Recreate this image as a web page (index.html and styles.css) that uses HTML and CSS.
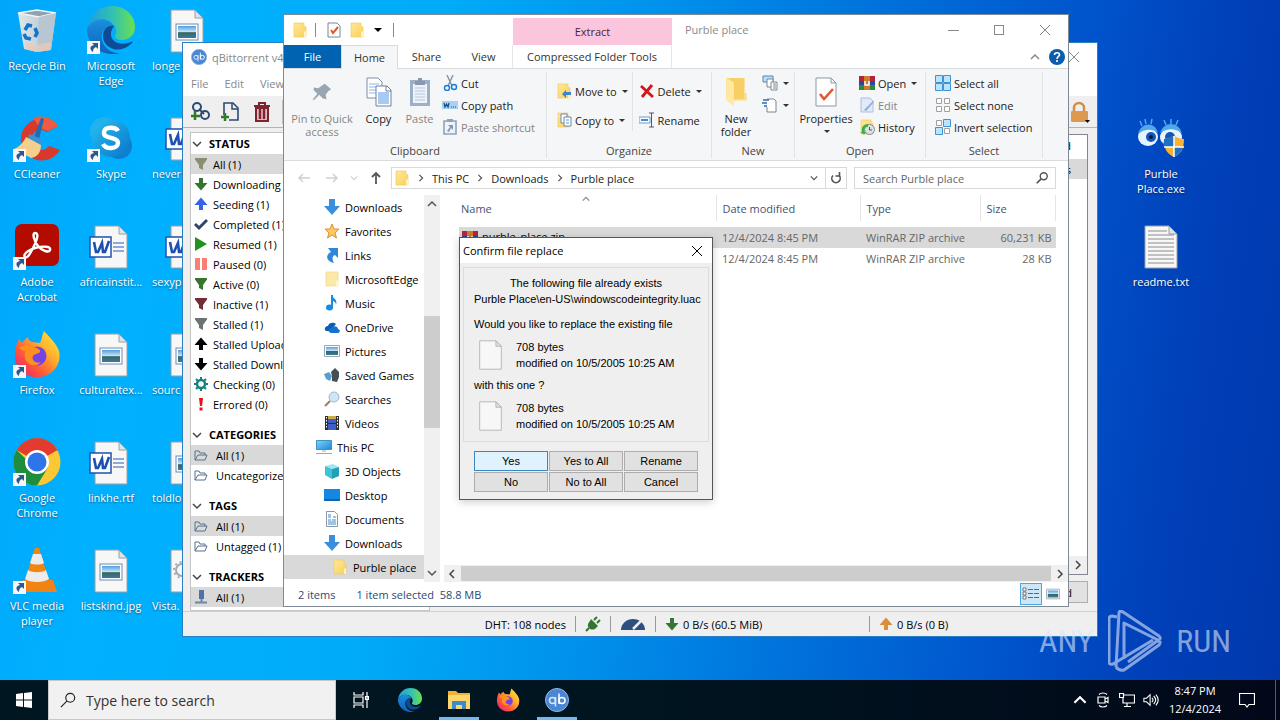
FILE: index.html
```html
<!DOCTYPE html>
<html lang="en">
<head>
    <meta charset="UTF-8">
    <meta name="viewport" content="width=device-width, initial-scale=1.0">
    <title>Desktop</title>
    <link rel="stylesheet" href="styles.css">
</head>
<body>
    <!-- icon sprite -->
    <svg class="sprite" aria-hidden="true">
        <defs>
            <linearGradient id="g-edge1" x1="0" y1="0" x2="1" y2="0"><stop offset="0" stop-color="#1b9de2"/><stop offset=".55" stop-color="#35c1b0"/><stop offset="1" stop-color="#6be04e"/></linearGradient>
            <linearGradient id="g-edge2" x1="0" y1="0" x2="0" y2="1"><stop offset="0" stop-color="#1a8fe0"/><stop offset="1" stop-color="#1160b8"/></linearGradient>
            <linearGradient id="g-fox" x1="1" y1="0" x2="0" y2="1"><stop offset="0" stop-color="#fff044"/><stop offset=".35" stop-color="#ffb22c"/><stop offset=".65" stop-color="#ff5a36"/><stop offset="1" stop-color="#e31587"/></linearGradient>
            <linearGradient id="g-sky" x1="0" y1="0" x2="0" y2="1"><stop offset="0" stop-color="#4ea0e4"/><stop offset=".5" stop-color="#cfe7f5"/><stop offset=".55" stop-color="#38675e"/><stop offset="1" stop-color="#3b78a8"/></linearGradient>
            <linearGradient id="g-skype" x1="0" y1="0" x2="1" y2="1"><stop offset="0" stop-color="#28c0f2"/><stop offset="1" stop-color="#0a76c8"/></linearGradient>
            <linearGradient id="g-bin" x1="0" y1="0" x2="1" y2="0"><stop offset="0" stop-color="#dfe6eb"/><stop offset="1" stop-color="#aebfcc"/></linearGradient>
            <linearGradient id="g-folder" x1="0" y1="0" x2="1" y2="1"><stop offset="0" stop-color="#ffe89a"/><stop offset="1" stop-color="#fbd058"/></linearGradient>
            <linearGradient id="g-pc" x1="0" y1="0" x2="1" y2="1"><stop offset="0" stop-color="#7fd4fb"/><stop offset="1" stop-color="#1c86d8"/></linearGradient>
        </defs>
        <symbol id="shortcut" viewBox="0 0 48 48">
            <rect x="0" y="35" width="13" height="13" fill="#f6f6f6"/>
            <path d="M5 37h6v6l-2-2c-2 1-3 2-3 5-4-3-3-6 1-7z" fill="#2d5791"/>
        </symbol>
        <symbol id="recycle" viewBox="0 0 48 48">
            <path d="M5 7l19-3 19 3-5 37-14 2-13-3z" fill="url(#g-bin)"/>
            <path d="M5 7l19-3 19 3-17 4z" fill="#8fa2b0" stroke="#f2f5f7" stroke-width="1.5"/>
            <path d="M26 11l17-4-5 37-14 2z" fill="#b7c6d1"/>
            <path d="M12 36l11 3v7l-11-3zM24 39l14-3-1 8-13 2z" fill="#efc8b4" opacity=".75"/>
            <path d="M12 24l3-5 4 1M22 22l2 5-2 4M18 33l-5-1-2-4" fill="none" stroke="#1573cc" stroke-width="3.6"/>
        </symbol>
        <symbol id="edge" viewBox="0 0 48 48">
            <path d="M0 23C2 9 12 0 25 0c14 0 23 10 23 21 0 8-6 13-13 13-5 0-8-2-7-4 2-3 2-8-2-12C20 11 5 12 0 23z" fill="url(#g-edge1)"/>
            <path d="M0 23c5-10 16-12 23-7 3 2 4 5 4 5-7-3-14 5-12 13 2 9 11 14 19 13-16 5-34-6-34-24z" fill="url(#g-edge2)"/>
            <path d="M27 20c-9-2-13 8-10 15 5 10 18 12 28 2 1-1 0-2-1-1-9 4-21 1-20-9 0-3 2-5 3-7z" fill="#0e4a96"/>
        </symbol>
        <symbol id="page" viewBox="0 0 48 48">
            <path d="M8 4h24l8 8v34H8z" fill="#f7f7f7" stroke="#9aa0a5"/>
            <path d="M32 4v8h8z" fill="#dfe3e6" stroke="#9aa0a5"/>
        </symbol>
        <symbol id="jpg" viewBox="0 0 48 48">
            <use href="#page"/>
            <rect x="13" y="18" width="22" height="16" fill="#fff" stroke="#6f8db4"/>
            <rect x="15" y="20" width="18" height="12" fill="url(#g-sky)"/>
        </symbol>
        <symbol id="word" viewBox="0 0 48 48">
            <use href="#page"/>
            <path d="M26 21h11M26 25h11M26 29h11" stroke="#2a5bbd"/>
            <rect x="3" y="15" width="21" height="20" fill="#fff" stroke="#1d50b0" stroke-width="1.5"/>
            <path d="M7 20l2 10h2l4-9 1 9h2l4-11" fill="none" stroke="#1d50b0" stroke-width="2.6"/>
        </symbol>
        <symbol id="gearfile" viewBox="0 0 48 48">
            <use href="#page"/>
            <circle cx="19" cy="24" r="6" fill="none" stroke="#a5abb0" stroke-width="2"/>
            <circle cx="19" cy="24" r="8" fill="none" stroke="#a5abb0" stroke-width="2" stroke-dasharray="2 3"/>
        </symbol>
        <symbol id="txt" viewBox="0 0 48 48">
            <use href="#page"/>
            <path d="M11 9h19M11 13h26M11 17h26M11 21h26M11 25h26M11 29h26M11 33h26M11 37h26M11 41h26" stroke="#8c8c8c"/>
        </symbol>
        <symbol id="ccleaner" viewBox="0 0 48 48">
            <path d="M45 12A21 21 0 1 0 47 36l-11-4a10 10 0 1 1-2-14z" fill="#d9382c"/>
            <path d="M45 12A21 21 0 0 0 20 4l7 10 8 3z" fill="#ef5a42"/>
            <path d="M28 4l3 1-5 20-5-2z" fill="#1e6cb4"/>
            <path d="M16 20l13 5-1 6-13-6z" fill="#3b93d4"/>
            <path d="M13 23l15 8c0 8-4 12-10 13L1 35c5-2 9-6 12-12z" fill="#f5cf8d"/>
        </symbol>
        <symbol id="skype" viewBox="0 0 48 48">
            <circle cx="17" cy="17" r="14" fill="#1fb2ee"/><circle cx="32" cy="32" r="13" fill="#0c7fd0"/>
            <circle cx="24" cy="24" r="19" fill="url(#g-skype)"/>
            <path d="M31 17c-2-4-13-5-14 1-1 8 14 4 14 11 0 6-12 7-15 1" fill="none" stroke="#fff" stroke-width="4.4"/>
        </symbol>
        <symbol id="acrobat" viewBox="0 0 48 48">
            <rect x="2" y="2" width="44" height="42" rx="7" fill="#b30b00"/>
            <path d="M12 35c-3-3 6-9 14-10s12 0 11 3-8 1-12-4-6-13-3-13c5 0 1 9-2 15s-6 11-8 9z" fill="none" stroke="#fff" stroke-width="2.4"/>
        </symbol>
        <symbol id="firefox" viewBox="0 0 48 48">
            <path d="M31 1c3 4 12 11 15 20 3 14-7 26-22 26S1 36 2 23c0-5 2-10 4-14l3 4c2-3 4-4 6-6 0 3 2 4 4 5l8 1c2-4 2-8 4-12z" fill="url(#g-fox)"/>
            <circle cx="24" cy="26" r="9.500" fill="#7542e5"/>
            <path d="M6 18c5-4 11-3 15-1 4 1 7 3 6 5s-5 1-7 4c-2 4 3 8 8 6-5 6-14 3-16-4-1-3 0-6 1-7-3-1-5-1-7-3z" fill="#ff8f20"/>
        </symbol>
        <symbol id="chrome" viewBox="0 0 48 48">
            <circle cx="24" cy="24" r="23.500" fill="#fcc934"/>
            <path d="M24 24L3.600 12A23.500 23.500 0 0 1 44.500 12z" fill="#e33b2e"/>
            <path d="M24 24h-8L3.600 12A23.500 23.500 0 0 0 24 47.500l11-18z" fill="#1e8e3e"/>
            <circle cx="24" cy="24" r="12" fill="#fff"/><circle cx="24" cy="24" r="9.500" fill="#2f74e8"/>
        </symbol>
        <symbol id="vlc" viewBox="0 0 48 48">
            <path d="M10 34h30l4 12H5z" fill="#f08217"/>
            <path d="M22 2h4l11 36c-5 4-21 4-26 0z" fill="#f2850f"/>
            <path d="M20 8h8l3 9c-3 2-11 2-14 0zM15 24c4 3 14 3 18 0l3 9c-5 4-19 4-24 0z" fill="#ececec"/>
        </symbol>
        <symbol id="eyes" viewBox="0 0 48 48">
            <ellipse cx="11" cy="23" rx="10" ry="9" fill="#e6f4ff"/><ellipse cx="34" cy="23" rx="11" ry="9" fill="#e6f4ff"/>
            <path d="M1 20c3-12 17-13 20-1-6-5-14-4-20 1zM23 19c4-12 18-12 22 0-7-5-15-5-22 0z" fill="#4fa8e8"/>
            <path d="M5 12L3 7M9 10L8 5M14 10l1-5M29 11l-2-5M34 10V5M39 11l2-5" stroke="#4fa8e8" stroke-width="1.500"/>
            <circle cx="14" cy="23" r="5" fill="#1457b8"/><circle cx="33" cy="23" r="5" fill="#1457b8"/>
            <circle cx="14" cy="23" r="2" fill="#021a44"/>
            <path d="M27 25c4 0 7-2 10-3 3 1 6 3 10 3 0 10-3 15-10 18-7-3-10-8-10-18z" fill="#f9b234"/>
            <path d="M37 22v11H27c-1-2 0-5 0-8 4 0 7-2 10-3zM37 33h9c-2 5-5 8-9 10z" fill="#1b72c4"/>
            <path d="M37 22v21M27 33h20" stroke="#fff" stroke-width="1.500"/>
        </symbol>
        <symbol id="qb" viewBox="0 0 24 24">
            <circle cx="12" cy="12" r="11.500" fill="#4a86d2" stroke="#8fb7ea"/>
            <circle cx="7.500" cy="12.500" r="3" fill="none" stroke="#d8e8fb" stroke-width="1.500"/><path d="M10.500 9v9.500" stroke="#d8e8fb" stroke-width="1.500"/>
            <circle cx="17" cy="12.500" r="3" fill="none" stroke="#fff" stroke-width="1.500"/><path d="M14 5.500V16" stroke="#fff" stroke-width="1.500"/>
        </symbol>
        <!-- torrent client icons -->
        <symbol id="addlink" viewBox="0 0 22 22"><circle cx="8" cy="6" r="4" fill="none" stroke="#2e4a73" stroke-width="2"/><circle cx="16" cy="14" r="4" fill="none" stroke="#2e4a73" stroke-width="2"/><path d="M10 8l5 5" stroke="#2e4a73" stroke-width="2"/><path d="M6 10v9M2 15h9" stroke="#2f7b2b" stroke-width="2.500"/></symbol>
        <symbol id="addfile" viewBox="0 0 22 22"><path d="M4 14V2h9l5 5v12H9" fill="none" stroke="#2e4a73" stroke-width="1.600"/><path d="M12 2v6h6" fill="none" stroke="#2e4a73" stroke-width="1.500"/><path d="M5 12v8M1 16h8" stroke="#2f7b2b" stroke-width="2.500"/></symbol>
        <symbol id="trash" viewBox="0 0 22 22"><path d="M3 5h16M8 5V2h6v3" fill="none" stroke="#7c2430" stroke-width="2"/><path d="M5 7h12v13H5z" fill="#e2b9bd" stroke="#7c2430" stroke-width="2"/><path d="M9 8v10M13 8v10" stroke="#7c2430" stroke-width="2.400"/></symbol>
        <symbol id="lock" viewBox="0 0 22 22"><path d="M6 11V7a5 5 0 0 1 10 0v4" fill="none" stroke="#d08e48" stroke-width="2.500"/><rect x="3" y="10" width="17" height="11" rx="1" fill="#dc9a50"/><path d="M17 19h5l-2.500 3z" fill="#000"/></symbol>
        <symbol id="funnel" viewBox="0 0 14 14"><path d="M1 1h12v1.500L9 8v5l-4-2V8L1 2.500z" fill="currentColor"/></symbol>
        <symbol id="down" viewBox="0 0 14 14"><path d="M5 1h4v5h4.500L7 13.500.5 6H5z" fill="currentColor"/></symbol>
        <symbol id="up" viewBox="0 0 14 14"><path d="M5 13h4V8h4.500L7 .5.500 8H5z" fill="currentColor"/></symbol>
        <symbol id="tick" viewBox="0 0 14 14"><path d="M1 7l4 4 8-8" fill="none" stroke="currentColor" stroke-width="3"/></symbol>
        <symbol id="play" viewBox="0 0 14 14"><path d="M1 0l12 7-12 7z" fill="currentColor"/></symbol>
        <symbol id="pause" viewBox="0 0 14 14"><path d="M1 1h5v12H1zM8 1h5v12H8z" fill="currentColor"/></symbol>
        <symbol id="gear" viewBox="0 0 14 14"><circle cx="7" cy="7" r="4" fill="none" stroke="currentColor" stroke-width="2.500"/><path d="M7 0v3M7 11v3M0 7h3M11 7h3M2 2l2 2M10 10l2 2M2 12l2-2M10 4l2-2" stroke="currentColor" stroke-width="2"/></symbol>
        <symbol id="bang" viewBox="0 0 14 14"><path d="M5 1h4l-1 8H6zM5.500 10.500h3v3h-3z" fill="currentColor"/></symbol>
        <symbol id="openfolder" viewBox="0 0 14 14"><path d="M1 12V3h4l1 2h5v2M1 12l3-5h9l-2 5z" fill="none" stroke="currentColor"/></symbol>
        <symbol id="server" viewBox="0 0 14 14"><path d="M5 0h5v9H5z" fill="#4c71ad"/><path d="M7.500 9v3M1 12.500h12" stroke="#6e86a5" stroke-width="2"/></symbol>
        <symbol id="chev" viewBox="0 0 10 10"><path d="M1 3l4 4 4-4" fill="none" stroke="currentColor" stroke-width="1.500"/></symbol>
        <symbol id="plug" viewBox="0 0 16 16"><path d="M1 15l3-3M9 4l3-3M12 7l3-3" stroke="currentColor" stroke-width="2"/><path d="M6 3l7 7-2 2c-2 2-5 2-7 0s-1-5 1-7z" fill="currentColor"/></symbol>
        <symbol id="gauge" viewBox="0 0 24 12"><path d="M0 12a12 11 0 0 1 24 0z" fill="#2f4f80"/><path d="M12 11l9-9" stroke="#efefef" stroke-width="2.500"/></symbol>
        <!-- explorer icons -->
        <symbol id="folder" viewBox="0 0 16 16"><path d="M2 1h10v3l2 1v10H2z" fill="url(#g-folder)" stroke="#ecc65a" stroke-width=".6"/><path d="M12 10l2-1v6h-2z" fill="#fff3c0"/></symbol>
        <symbol id="palefolder" viewBox="0 0 16 16"><path d="M2 1h12v14H2z" fill="#fbe9a8" stroke="#ecd486" stroke-width=".6"/><path d="M12 10l2-1v6h-2z" fill="#fff6d2"/></symbol>
        <symbol id="checkpage" viewBox="0 0 16 16"><path d="M2 1h9l3 3v11H2z" fill="#fff" stroke="#7b8794"/><path d="M5 8l2 3 5-6" fill="none" stroke="#e05a2b" stroke-width="2"/></symbol>
        <symbol id="pin" viewBox="0 0 24 24"><path d="M15 3l7 6-3 2-3 4 1 5-4-1-4-4-6 6-1-1 5-6-4-4V7l5 1 4-3z" fill="#9aa5b3"/></symbol>
        <symbol id="copy" viewBox="0 0 26 30"><path d="M1 1h11l4 4v16H1z" fill="#fff" stroke="#7d8ea3"/><path d="M3 7h10M3 10h10M3 13h10M3 16h10" stroke="#8cb8e8"/><path d="M10 9h11l4 4v16H10z" fill="#fff" stroke="#6f8197"/><path d="M20 9v5h5" fill="none" stroke="#6f8197"/><path d="M12 16h11M12 18h11M12 20h11M12 22h11M12 24h11M12 26h11" stroke="#4e97e6"/></symbol>
        <symbol id="paste" viewBox="0 0 22 30"><rect x="1" y="3" width="20" height="26" fill="#9db0ca"/><path d="M4 7h14v19H4z" fill="#eef3f9"/><path d="M6 4h10v4H6zM9 1h4v3H9z" fill="#8a98ac"/><path d="M6 11h10M6 14h10M6 17h10M6 20h10M6 23h10" stroke="#b5c6df"/></symbol>
        <symbol id="cut" viewBox="0 0 16 16"><path d="M5 0l5 11M11 0L6 11" stroke="#8492a3" stroke-width="1.400"/><circle cx="5" cy="13" r="2.500" fill="none" stroke="#1d7fd4" stroke-width="1.500"/><circle cx="12" cy="12" r="2.500" fill="none" stroke="#1d7fd4" stroke-width="1.500"/></symbol>
        <symbol id="path" viewBox="0 0 16 16"><path d="M0 4h16v8H0z" fill="#a8d2f2"/><path d="M2 6l1 4 1.500-3L6 10l1-4M9 10h1M11 10h1M13 10h1" fill="none" stroke="#174d85" stroke-width="1.200"/></symbol>
        <symbol id="pasteshort" viewBox="0 0 16 16"><path d="M2 2h12v13H2z" fill="#eef3f9" stroke="#8fa2bb" stroke-width="1.600"/><path d="M5 0h6v3H5z" fill="#8fa2bb"/><path d="M6 6h5v5l-2-2-2 4-2-1 3-4z" fill="#7f97b6"/></symbol>
        <symbol id="moveto" viewBox="0 0 16 16"><use href="#folder"/><path d="M15 9h-5V7l-4 4 4 4v-3h5z" fill="#3b86cf"/></symbol>
        <symbol id="copyto" viewBox="0 0 16 16"><use href="#folder"/><path d="M5 2h6v9H5z" fill="#fff" stroke="#6d87ab"/><path d="M8 5h7v9H8z" fill="#fff" stroke="#6d87ab"/><path d="M10 8h3M10 11h3" stroke="#4e97e6"/></symbol>
        <symbol id="delete" viewBox="0 0 16 16"><path d="M2 3l12 11M13 2L3 14" stroke="#d5141b" stroke-width="2.800"/></symbol>
        <symbol id="rename" viewBox="0 0 16 16"><path d="M0 5h11v6H0z" fill="#fff" stroke="#6d9cc8"/><path d="M2 7h7v2H2z" fill="#3f8fd8"/><path d="M10 1h5M10 15h5M12.500 1v14" stroke="#556"/></symbol>
        <symbol id="newfolder" viewBox="0 0 22 28"><path d="M2 1h17v20H2z" fill="#f8cf63"/><path d="M2 1l7 4v22l-7-5z" fill="#ffe9a3"/><path d="M19 15h2v7H9v-1h10z" fill="#fbdc83"/></symbol>
        <symbol id="newitem" viewBox="0 0 16 16"><path d="M1 1h10v6H1z" fill="#bfe0f6" stroke="#4d87b5"/><path d="M5 4h6v8H5z" fill="#fff" stroke="#7b8794"/><path d="M9 7h6v8H9z" fill="#fff" stroke="#7b8794"/><path d="M11 9h3M11 11h3M11 13h3" stroke="#7b8794"/></symbol>
        <symbol id="easy" viewBox="0 0 16 16"><path d="M5 2h7l2 2v11H5" fill="#fff" stroke="#7b8794"/><path d="M1 3h6M0 6h5M2 9h3" stroke="#2f6db3" stroke-width="1.300"/><path d="M5 10v5" stroke="#7b8794"/></symbol>
        <symbol id="props" viewBox="0 0 22 30"><path d="M1 1h15l5 5v23H1z" fill="#fff" stroke="#8b97a5"/><path d="M16 1v5h5" fill="none" stroke="#8b97a5"/><path d="M5 17l4 5 9-10" fill="none" stroke="#e4572e" stroke-width="2.600"/></symbol>
        <symbol id="rar" viewBox="0 0 16 16"><path d="M0 1h16v5H0z" fill="#b3243a"/><path d="M0 6h16v4H0z" fill="#2848a8"/><path d="M0 10h16v5H0z" fill="#2d8a3a"/><path d="M5 1h6v14H5z" fill="#cf7a2c"/><path d="M6 6v4h4V6" fill="none" stroke="#fff" stroke-width="1.500"/></symbol>
        <symbol id="editpage" viewBox="0 0 16 16"><path d="M2 1h9l3 3v11H2z" fill="#dfeafa" stroke="#aebfdc"/><path d="M5 13l9-9 1 1-8 9z" fill="#93a9cd"/></symbol>
        <symbol id="history" viewBox="0 0 16 16"><use href="#folder"/><circle cx="10.500" cy="10.500" r="5" fill="#d9e3e4" stroke="#7f8f92"/><path d="M10.500 8v3h2.500" fill="none" stroke="#555"/><path d="M9 5c-5 0-7 4-6 8H1l4 2.500L7.500 13H5.500C5 10 6 8 9 8z" fill="#3fae49"/></symbol>
        <symbol id="selall" viewBox="0 0 16 16"><path d="M.5.5h7v7h-7zM8.500.5h7v7h-7zM.5 8.500h7v7h-7zM8.500 8.500h7v7h-7z" fill="#bfe3fb" stroke="#3b93d8"/></symbol>
        <symbol id="selnone" viewBox="0 0 16 16"><path d="M1.500 1.500h5v5h-5zM9.500 1.500h5v5h-5zM1.500 9.500h5v5h-5zM9.500 9.500h5v5h-5z" fill="#fff" stroke="#a0a0a0"/></symbol>
        <symbol id="selinv" viewBox="0 0 16 16"><path d="M1.500 1.500h5v5h-5zM9.500 9.500h5v5h-5z" fill="#fff" stroke="#a0a0a0"/><path d="M8.500.5h7v7h-7zM.5 8.500h7v7h-7z" fill="#bfe3fb" stroke="#3b93d8"/></symbol>
        <symbol id="help" viewBox="0 0 16 16"><circle cx="8" cy="8" r="8" fill="#0b5cad"/><path d="M5.500 6c0-3 5-3 5 0 0 1.500-2.500 1.500-2.500 4M8 11v2" fill="none" stroke="#fff" stroke-width="1.600"/></symbol>
        <symbol id="arrow" viewBox="0 0 16 16"><path d="M14 8H3M7 4L3 8l4 4" fill="none" stroke="currentColor" stroke-width="1.500"/></symbol>
        <symbol id="arrowup" viewBox="0 0 16 16"><path d="M8 14V3M4 7l4-4 4 4" fill="none" stroke="currentColor" stroke-width="1.800"/></symbol>
        <symbol id="refresh" viewBox="0 0 12 12"><path d="M9 3.500A4.200 4.200 0 1 1 3 3.500" fill="none" stroke="currentColor" stroke-width="1.600"/><path d="M5.500 4H9.500V0" fill="none" stroke="currentColor" stroke-width="1.600"/></symbol>
        <symbol id="glass" viewBox="0 0 16 16"><circle cx="10" cy="6" r="4" fill="none" stroke="currentColor" stroke-width="1.600"/><path d="M7 9l-5 5" stroke="currentColor" stroke-width="2"/></symbol>
        <symbol id="bigglass" viewBox="0 0 18 18"><circle cx="11.500" cy="6.500" r="5" fill="none" stroke="currentColor" stroke-width="1.300"/><path d="M8 10l-7 7" stroke="currentColor" stroke-width="1.300"/></symbol>
        <symbol id="close" viewBox="0 0 12 12"><path d="M1 1l10 10M11 1L1 11" stroke="currentColor"/></symbol>
        <symbol id="bluedown" viewBox="0 0 16 16"><path d="M5 0h6v7h5l-8 9-8-9h5z" fill="#3b8ede"/></symbol>
        <symbol id="star" viewBox="0 0 16 16"><path d="M8 1l2 5h5l-4 4 1.500 5L8 12l-4.500 3L5 10 1 6h5z" fill="#fcc95e" stroke="#dd8f3b"/></symbol>
        <symbol id="link" viewBox="0 0 16 16"><path d="M4 1h10v10l-3-3c-3 1-3 4-1 8-8-2-9-8-3-11z" fill="#2f87d9"/></symbol>
        <symbol id="music" viewBox="0 0 16 16"><path d="M8 0c1 4 6 4 4 10 0-3-2-4-4-4" fill="#168be0"/><ellipse cx="5.500" cy="12.500" rx="3.500" ry="3" fill="#168be0"/><path d="M8 0v12" stroke="#168be0" stroke-width="2"/></symbol>
        <symbol id="onedrive" viewBox="0 0 16 16"><path d="M1 11a3 3 0 0 1 3-4c1-4 6-4 8-2L6 12H2z" fill="#0a5fb5"/><path d="M5 13c-1-3 1-4 3-4 1-3 6-2 6 1 3 1 2 4 0 4H7z" fill="#1373cf"/></symbol>
        <symbol id="picture" viewBox="0 0 16 16"><path d="M.5 2.500h15v11H.5z" fill="#fff" stroke="#9aa7b3"/><path d="M2 4h12v8H2z" fill="url(#g-sky)"/></symbol>
        <symbol id="games" viewBox="0 0 16 16"><path d="M8 14V9L7 5l4-4 4 4v5l-2 5z" fill="#444e57"/><path d="M0 7l5-2 3 4-2 5-4-2z" fill="#5c9ed0"/></symbol>
        <symbol id="searches" viewBox="0 0 16 16"><circle cx="10" cy="6" r="5" fill="#cfe6f7" stroke="#a5b7c4"/><path d="M6 10l-5 5" stroke="#a2795d" stroke-width="2"/></symbol>
        <symbol id="video" viewBox="0 0 16 16"><path d="M1 1h14v14H1z" fill="#303030"/><path d="M4 1h8v7H4z" fill="#cda94a"/><path d="M4 4h8v4H4zM4 9h8v6H4z" fill="#3e5fc4"/><path d="M2.500 2v12M13.500 2v12" stroke="#fff" stroke-dasharray="1.500 1.500"/></symbol>
        <symbol id="pc" viewBox="0 0 16 16"><path d="M.5 1.500h15v9H.5z" fill="url(#g-pc)" stroke="#4290c4"/><path d="M6 12h4M0 14.500h16" stroke="#9aa7b3"/></symbol>
        <symbol id="cube" viewBox="0 0 16 16"><path d="M1 3l8-2 6 3-7 2z" fill="#9fe6ee"/><path d="M1 3l7 3v10l-7-4z" fill="#3cc3d6"/><path d="M8 6l7-2v9l-7 3z" fill="#1f9fb8"/></symbol>
        <symbol id="desk" viewBox="0 0 16 16"><path d="M0 2h16v12H0z" fill="#1488e0"/><path d="M0 12h16v2H0z" fill="#0b64b4"/></symbol>
        <symbol id="docs" viewBox="0 0 16 16"><path d="M2.500.5h8l3 3v12h-11z" fill="#fff" stroke="#8a98a6"/><path d="M4 4h3M4 6h3M9 6h3M4 9h3M8 9h4M4 11h8M4 13h8" stroke="#3f89c9"/></symbol>
        <symbol id="details" viewBox="0 0 18 14"><path d="M1 1h3v3H1zM1 5h3v3H1zM1 9h3v3H1z" fill="#fff" stroke="#777"/><path d="M6 2.500h5M12 2.500h5M6 6.500h5M12 6.500h5M6 10.500h5M12 10.500h5" stroke="#666"/></symbol>
        <!-- taskbar icons -->
        <symbol id="windows" viewBox="0 0 16 16"><path d="M0 2l7-1v6.500H0zM8 1l8-1v7.500H8zM0 8.500h7V15l-7-1zM8 8.500h8V16l-8-1z" fill="#fff"/></symbol>
        <symbol id="taskview" viewBox="0 0 16 16"><path d="M1 0v3h9V0M1 16v-3h9v3M1 5h9v6H1zM14 0v16M12.500 4.500h3v3h-3z" fill="none" stroke="#fff" stroke-width="1.200"/></symbol>
        <symbol id="filesapp" viewBox="0 0 24 24"><path d="M1 3h8l2 2h12v16H1z" fill="#f2b233"/><path d="M1 7h22v14H1z" fill="#ffd66b"/><path d="M5 13h14v8h-4v-4H9v4H5z" fill="#3b8ccb"/></symbol>
        <symbol id="camera" viewBox="0 0 16 16"><path d="M3 5h7v6H3zM10 7l3-1.500v5L10 9M4 2.500c2-2 6-2 8 0M4 13.500c2 2 6 2 8 0" fill="none" stroke="#fff" stroke-width="1.200"/></symbol>
        <symbol id="network" viewBox="0 0 16 16"><path d="M5 3h10.500v8H4V6M8 11v3M5 14.500h7M.5 1.500h4v4h-4z" fill="none" stroke="#fff" stroke-width="1.200"/></symbol>
        <symbol id="volume" viewBox="0 0 18 16"><path d="M1 6h3l4-4v12l-4-4H1zM10 5.500c1.500 1.500 1.500 3.500 0 5M12 3.500c3 3 3 6 0 9M14.500 2c3.500 4 3.500 8 0 12" fill="none" stroke="#fff" stroke-width="1.200"/></symbol>
        <symbol id="action" viewBox="0 0 16 16"><path d="M.5 1.500h15v11H10l-2 2.500-2-2.500H.5z" fill="none" stroke="#fff" stroke-width="1.200"/></symbol>
    </svg>

    <main class="desktop">
        <div class="shortcuts">
            <button class="shortcut"><svg><use href="#recycle"/></svg>Recycle Bin</button>
            <button class="shortcut"><svg><use href="#ccleaner"/><use href="#shortcut"/></svg>CCleaner</button>
            <button class="shortcut"><svg><use href="#acrobat"/><use href="#shortcut"/></svg>Adobe Acrobat</button>
            <button class="shortcut"><svg><use href="#firefox"/><use href="#shortcut"/></svg>Firefox</button>
            <button class="shortcut"><svg><use href="#chrome"/><use href="#shortcut"/></svg>Google Chrome</button>
            <button class="shortcut"><svg><use href="#vlc"/><use href="#shortcut"/></svg>VLC media player</button>
            <button class="shortcut"><svg><use href="#edge"/><use href="#shortcut"/></svg>Microsoft Edge</button>
            <button class="shortcut"><svg><use href="#skype"/><use href="#shortcut"/></svg>Skype</button>
            <button class="shortcut"><svg><use href="#word"/></svg>africainstit...</button>
            <button class="shortcut"><svg><use href="#jpg"/></svg>culturaltex...</button>
            <button class="shortcut"><svg><use href="#word"/></svg>linkhe.rtf</button>
            <button class="shortcut"><svg><use href="#jpg"/></svg>listskind.jpg</button>
            <button class="shortcut clipped"><svg><use href="#jpg"/></svg>longe</button>
            <button class="shortcut clipped"><svg><use href="#word"/></svg>never</button>
            <button class="shortcut clipped"><svg><use href="#word"/></svg>sexyp</button>
            <button class="shortcut clipped"><svg><use href="#jpg"/></svg>sourc</button>
            <button class="shortcut clipped"><svg><use href="#jpg"/></svg>toldlo</button>
            <button class="shortcut clipped"><svg><use href="#gearfile"/></svg>Vista.</button>
        </div>
        <div class="shortcuts shortcuts-right">
            <button class="shortcut"><svg><use href="#eyes"/></svg>Purble Place.exe</button>
            <button class="shortcut"><svg><use href="#txt"/></svg>readme.txt</button>
        </div>

        <section class="window torrent">
            <header class="torrent-title">
                <svg class="icon"><use href="#qb"/></svg>
                <span>qBittorrent v4</span>
                <button class="close" aria-label="Close"><svg><use href="#close"/></svg></button>
            </header>
            <nav class="torrent-menu">
                <button>File</button>
                <button>Edit</button>
                <button>View</button>
            </nav>
            <div class="torrent-tools">
                <button aria-label="Add link"><svg><use href="#addlink"/></svg></button>
                <button aria-label="Add file"><svg><use href="#addfile"/></svg></button>
                <button aria-label="Remove"><svg><use href="#trash"/></svg></button>
                <i></i>
                <button class="lock" aria-label="Lock"><svg><use href="#lock"/></svg></button>
            </div>
            <div class="torrent-body">
                <aside class="filters">
                    <h2><svg><use href="#chev"/></svg>STATUS</h2>
                    <ul>
                        <li class="active"><svg class="olive"><use href="#funnel"/></svg>All (1)</li>
                        <li><svg class="green"><use href="#down"/></svg>Downloading</li>
                        <li><svg class="blue"><use href="#up"/></svg>Seeding (1)</li>
                        <li><svg class="navy"><use href="#tick"/></svg>Completed (1)</li>
                        <li><svg class="lime"><use href="#play"/></svg>Resumed (1)</li>
                        <li><svg class="salmon"><use href="#pause"/></svg>Paused (0)</li>
                        <li><svg class="green"><use href="#funnel"/></svg>Active (0)</li>
                        <li><svg class="wine"><use href="#funnel"/></svg>Inactive (1)</li>
                        <li><svg class="grey"><use href="#funnel"/></svg>Stalled (1)</li>
                        <li><svg><use href="#up"/></svg>Stalled Uploading</li>
                        <li><svg><use href="#down"/></svg>Stalled Downloading</li>
                        <li><svg class="teal"><use href="#gear"/></svg>Checking (0)</li>
                        <li><svg class="red"><use href="#bang"/></svg>Errored (0)</li>
                    </ul>
                    <h2><svg><use href="#chev"/></svg>CATEGORIES</h2>
                    <ul class="wide">
                        <li class="active"><svg class="steel"><use href="#openfolder"/></svg>All (1)</li>
                        <li><svg class="steel"><use href="#openfolder"/></svg>Uncategorized</li>
                    </ul>
                    <h2><svg><use href="#chev"/></svg>TAGS</h2>
                    <ul class="wide">
                        <li class="active"><svg class="steel"><use href="#openfolder"/></svg>All (1)</li>
                        <li><svg class="steel"><use href="#openfolder"/></svg>Untagged (1)</li>
                    </ul>
                    <h2><svg><use href="#chev"/></svg>TRACKERS</h2>
                    <ul class="wide">
                        <li class="active"><svg><use href="#server"/></svg>All (1)</li>
                    </ul>
                </aside>
                <div class="transfers">
                    <div class="transfer-list">
                        <div class="transfer-head">d</div>
                        <div class="transfer-row">s</div>
                        <button class="scroll-right" aria-label="Scroll right"><svg class="right"><use href="#chev"/></svg></button>
                    </div>
                    <button class="speed">d</button>
                </div>
            </div>
            <footer class="torrent-status">
                <span>DHT: 108 nodes</span>
                <span><svg class="plug"><use href="#plug"/></svg></span>
                <span><svg class="gauge"><use href="#gauge"/></svg></span>
                <span class="rate"><svg class="green"><use href="#down"/></svg>0 B/s (60.5 MiB)</span>
                <span class="rate"><svg class="orange"><use href="#up"/></svg>0 B/s (0 B)</span>
            </footer>
        </section>

        <section class="window explorer">
            <header class="explorer-top">
                <div class="quick">
                    <svg><use href="#folder"/></svg><i></i>
                    <svg><use href="#checkpage"/></svg>
                    <svg><use href="#folder"/></svg>
                    <b class="caret customize"></b><i></i>
                </div>
                <div class="context">Extract</div>
                <h1>Purble place</h1>
                <div class="controls">
                    <button aria-label="Minimize"><span class="min"></span></button>
                    <button aria-label="Maximize"><span class="max"></span></button>
                    <button aria-label="Close"><svg><use href="#close"/></svg></button>
                </div>
            </header>
            <nav class="tabs">
                <button class="file">File</button>
                <button class="home">Home</button>
                <button>Share</button>
                <button>View</button>
                <button class="tools">Compressed Folder Tools</button>
                <div class="tabs-end">
                    <svg class="collapse"><use href="#chev"/></svg>
                    <svg><use href="#help"/></svg>
                </div>
            </nav>
            <div class="ribbon">
                <section class="group clipboard">
                    <div class="group-body">
                        <button class="big muted"><svg class="pin"><use href="#pin"/></svg>Pin to Quick access</button>
                        <button class="big"><svg><use href="#copy"/></svg>Copy</button>
                        <button class="big muted"><svg><use href="#paste"/></svg>Paste</button>
                        <div class="stack">
                            <button><svg><use href="#cut"/></svg>Cut</button>
                            <button><svg><use href="#path"/></svg>Copy path</button>
                            <button class="muted"><svg><use href="#pasteshort"/></svg>Paste shortcut</button>
                        </div>
                    </div>
                    <h2>Clipboard</h2>
                </section>
                <section class="group organize">
                    <div class="group-body">
                        <div class="stack loose ruled">
                            <button><svg><use href="#moveto"/></svg>Move to<b class="caret"></b></button>
                            <button><svg><use href="#copyto"/></svg>Copy to<b class="caret"></b></button>
                        </div>
                        <div class="stack loose">
                            <button><svg><use href="#delete"/></svg>Delete<b class="caret"></b></button>
                            <button><svg><use href="#rename"/></svg>Rename</button>
                        </div>
                    </div>
                    <h2>Organize</h2>
                </section>
                <section class="group new">
                    <div class="group-body">
                        <button class="big"><svg><use href="#newfolder"/></svg>New folder</button>
                        <div class="stack">
                            <button aria-label="New item"><svg><use href="#newitem"/></svg><b class="caret"></b></button>
                            <button aria-label="Easy access"><svg><use href="#easy"/></svg><b class="caret"></b></button>
                        </div>
                    </div>
                    <h2>New</h2>
                </section>
                <section class="group open">
                    <div class="group-body">
                        <button class="big"><svg><use href="#props"/></svg>Properties<b class="caret"></b></button>
                        <div class="stack">
                            <button><svg><use href="#rar"/></svg>Open<b class="caret"></b></button>
                            <button class="muted"><svg><use href="#editpage"/></svg>Edit</button>
                            <button><svg><use href="#history"/></svg>History</button>
                        </div>
                    </div>
                    <h2>Open</h2>
                </section>
                <section class="group select">
                    <div class="group-body">
                        <div class="stack">
                            <button><svg><use href="#selall"/></svg>Select all</button>
                            <button><svg><use href="#selnone"/></svg>Select none</button>
                            <button><svg><use href="#selinv"/></svg>Invert selection</button>
                        </div>
                    </div>
                    <h2>Select</h2>
                </section>
            </div>
            <div class="address">
                <button class="faint" aria-label="Back"><svg><use href="#arrow"/></svg></button>
                <button class="faint flip" aria-label="Forward"><svg><use href="#arrow"/></svg></button>
                <button class="faint tiny" aria-label="Recent"><svg><use href="#chev"/></svg></button>
                <button aria-label="Up"><svg><use href="#arrowup"/></svg></button>
                <div class="crumbs">
                    <svg class="icon"><use href="#folder"/></svg>
                    <svg class="right"><use href="#chev"/></svg><a href="#">This PC</a>
                    <svg class="right"><use href="#chev"/></svg><a href="#">Downloads</a>
                    <svg class="right"><use href="#chev"/></svg><a href="#">Purble place</a>
                    <svg class="drop"><use href="#chev"/></svg>
                    <button class="refresh" aria-label="Refresh"><svg><use href="#refresh"/></svg></button>
                </div>
                <label class="find">
                    <input type="text" placeholder="Search Purble place" aria-label="Search Purble place">
                    <svg><use href="#glass"/></svg>
                </label>
            </div>
            <div class="explorer-body">
                <nav class="tree">
                    <a href="#"><svg><use href="#bluedown"/></svg>Downloads</a>
                    <a href="#"><svg><use href="#star"/></svg>Favorites</a>
                    <a href="#"><svg><use href="#link"/></svg>Links</a>
                    <a href="#"><svg><use href="#palefolder"/></svg>MicrosoftEdge</a>
                    <a href="#"><svg><use href="#music"/></svg>Music</a>
                    <a href="#"><svg><use href="#onedrive"/></svg>OneDrive</a>
                    <a href="#"><svg><use href="#picture"/></svg>Pictures</a>
                    <a href="#"><svg><use href="#games"/></svg>Saved Games</a>
                    <a href="#"><svg><use href="#searches"/></svg>Searches</a>
                    <a href="#"><svg><use href="#video"/></svg>Videos</a>
                    <a href="#" class="root"><svg><use href="#pc"/></svg>This PC</a>
                    <a href="#"><svg><use href="#cube"/></svg>3D Objects</a>
                    <a href="#"><svg><use href="#desk"/></svg>Desktop</a>
                    <a href="#"><svg><use href="#docs"/></svg>Documents</a>
                    <a href="#"><svg><use href="#bluedown"/></svg>Downloads</a>
                    <a href="#" class="child"><svg><use href="#folder"/></svg>Purble place</a>
                </nav>
                <div class="vscroll">
                    <svg class="upward"><use href="#chev"/></svg>
                    <div class="vtrack"><div class="vthumb"></div></div>
                    <svg><use href="#chev"/></svg>
                </div>
                <div class="files">
                    <table>
                        <thead>
                            <tr><th class="name">Name<svg class="sort"><use href="#chev"/></svg></th><th>Date modified</th><th>Type</th><th>Size</th></tr>
                        </thead>
                        <tbody>
                            <tr class="picked"><td><svg><use href="#rar"/></svg>purble_place.zip</td><td>12/4/2024 8:45 PM</td><td>WinRAR ZIP archive</td><td>60,231 KB</td></tr>
                            <tr><td></td><td>12/4/2024 8:45 PM</td><td>WinRAR ZIP archive</td><td>28 KB</td></tr>
                        </tbody>
                    </table>
                    <div class="hscroll">
                        <svg class="left"><use href="#chev"/></svg>
                        <div class="hthumb"></div>
                        <svg class="right"><use href="#chev"/></svg>
                    </div>
                </div>
            </div>
            <footer class="explorer-status">
                <span>2 items</span>
                <span>1 item selected&nbsp; 58.8 MB</span>
                <button class="view on" aria-label="Details"><svg><use href="#details"/></svg></button>
                <button class="view" aria-label="Large icons"><svg><use href="#picture"/></svg></button>
            </footer>
        </section>

        <section class="window dialog" role="dialog" aria-label="Confirm file replace">
            <header>
                <span>Confirm file replace</span>
                <button aria-label="Close"><svg><use href="#close"/></svg></button>
            </header>
            <div class="question">
                <p class="center">The following file already exists</p>
                <p class="center">Purble Place\en-US\windowscodeintegrity.luac</p>
                <p class="ask">Would you like to replace the existing file</p>
                <div class="entry">
                    <svg viewBox="7 3 34 44"><use href="#page" width="48" height="48"/></svg>
                    <p>708 bytes<br>modified on 10/5/2005 10:25 AM</p>
                </div>
                <p>with this one ?</p>
                <div class="entry">
                    <svg viewBox="7 3 34 44"><use href="#page" width="48" height="48"/></svg>
                    <p>708 bytes<br>modified on 10/5/2005 10:25 AM</p>
                </div>
            </div>
            <div class="answers">
                <button class="default">Yes</button>
                <button>Yes to All</button>
                <button>Rename</button>
                <button>No</button>
                <button>No to All</button>
                <button>Cancel</button>
            </div>
        </section>

        <div class="watermark">
            <span>ANY</span>
            <svg viewBox="0 0 54 62"><path d="M9 7L4 6Q1 6 1 9v43q0 3 4 2l40-24M8 57L11 3q0-3 4-1l36 24q3 3-1 4L16 13v36M8 57q3 4 8 3l35-25q3-4-2-4L20 52" fill="none" stroke="currentColor" stroke-width="3" stroke-linejoin="round"/></svg>
            <span>RUN</span>
        </div>
    </main>

    <footer class="taskbar">
        <button class="start" aria-label="Start"><svg><use href="#windows"/></svg></button>
        <label class="search">
            <svg><use href="#bigglass"/></svg>
            <input type="text" placeholder="Type here to search" aria-label="Type here to search">
        </label>
        <button class="app" aria-label="Task view"><svg class="thin"><use href="#taskview"/></svg></button>
        <button class="app" aria-label="Edge"><svg><use href="#edge"/></svg></button>
        <button class="app running" aria-label="File Explorer"><svg><use href="#filesapp"/></svg></button>
        <button class="app" aria-label="Firefox"><svg><use href="#firefox"/></svg></button>
        <button class="app running" aria-label="qBittorrent"><svg><use href="#qb"/></svg></button>
        <div class="tray">
            <svg class="upward"><use href="#chev"/></svg>
            <svg><use href="#camera"/></svg>
            <svg><use href="#network"/></svg>
            <svg><use href="#volume"/></svg>
            <div class="clock">8:47 PM<br>12/4/2024</div>
            <button aria-label="Notifications"><svg><use href="#action"/></svg></button>
        </div>
    </footer>
</body>
</html>
```
FILE: styles.css
```css
* {
    margin: 0;
    padding: 0;
    box-sizing: border-box;
}

body {
    display: flex;
    flex-direction: column;
    height: 100vh;
    overflow: hidden;
    font-family: "Open Sans", "Noto Sans", sans-serif;
    font-size: 11px;
    line-height: 15px;
    color: #000;
}

button {
    border: none;
    background: none;
    font: inherit;
    color: inherit;
}

a {
    color: inherit;
    text-decoration: none;
}

ul {
    list-style: none;
}

h1, h2 {
    font-size: 11px;
    font-weight: normal;
}

svg {
    flex: none;
    display: block;
    width: 16px;
    height: 16px;
}

.sprite {
    position: absolute;
    width: 0;
    height: 0;
}

/* chevron directions */
.right { transform: rotate(-90deg); }
.left { transform: rotate(90deg); }
.upward { transform: rotate(180deg); }

/* desktop */
.desktop {
    position: relative;
    flex: 1;
    overflow: hidden;
    background: linear-gradient(98deg, #00a6fa 0%, #00b1ff 12%, #00acf8 32%, #0092ec 48%, #0074dc 63%, #0053cc 80%, #0040b8 90%, #0038ac 100%);
}

.shortcuts {
    display: grid;
    grid-auto-flow: column;
    grid-template-rows: repeat(6, 108px);
    grid-auto-columns: 74px;
    justify-content: start;
}

.shortcuts-right {
    position: absolute;
    top: 108px;
    right: 82px;
}

.shortcut {
    display: flex;
    flex-direction: column;
    align-items: center;
    gap: 4px;
    padding-top: 6px;
    color: #fff;
    text-shadow: 0 1px 2px rgba(0, 0, 0, 0.5);
}

.shortcut svg {
    width: 48px;
    height: 48px;
}

.clipped {
    align-items: flex-start;
    padding-left: 4px;
}

.clipped svg {
    margin-left: 11px;
}

.window {
    position: absolute;
    display: flex;
    flex-direction: column;
    background: #fff;
}

/* torrent client */
.torrent {
    inset: 42px 182px 43px 182px;
    border: 1px solid #2a7fc4;
    background: #efefef;
}

.torrent-title {
    display: flex;
    align-items: center;
    gap: 5px;
    height: 28px;
    padding: 0 17px 0 8px;
    background: #fff;
    color: #888;
}

.torrent-title .close {
    margin-left: auto;
}

.torrent-title .close svg {
    width: 12px;
    height: 12px;
}

.torrent-menu {
    display: flex;
    gap: 16px;
    height: 25px;
    padding-left: 8px;
    background: #fff;
    color: #888;
}

.torrent-tools {
    display: flex;
    align-items: center;
    gap: 9px;
    height: 32px;
    padding: 0 7px 0 6px;
    border-bottom: 1px solid #b4b4b4;
}

.torrent-tools i {
    width: 1px;
    height: 24px;
    background: #c4c4c4;
}

.torrent-tools svg {
    width: 22px;
    height: 22px;
}

.lock {
    margin-left: auto;
}

.torrent-body {
    flex: 1;
    display: flex;
    min-height: 0;
    padding: 4px 7px 0;
}

.filters {
    width: 240px;
    border: 1px solid #c4c4c4;
    background: #fff;
    overflow: hidden;
}

.filters h2 {
    display: flex;
    align-items: center;
    gap: 7px;
    height: 21px;
    padding-left: 1px;
    font-weight: bold;
}

.filters h2 svg {
    width: 10px;
    height: 10px;
    color: #444;
}

.filters ul {
    margin-bottom: 10px;
}

.filters li {
    display: flex;
    align-items: center;
    gap: 5px;
    height: 20px;
    padding-left: 3px;
    white-space: nowrap;
}

.filters .wide li {
    gap: 8px;
}

.filters li svg, .torrent-status svg {
    width: 14px;
    height: 14px;
}

.active {
    background: #d9d9d9;
}

.olive { color: #8d8d74; }
.green { color: #35752f; }
.blue { color: #3465e8; }
.navy { color: #2f4468; }
.lime { color: #22921f; }
.salmon { color: #fa7f74; }
.wine { color: #742c35; }
.grey { color: #6d7275; }
.teal { color: #16827f; }
.red { color: #e8101c; }
.steel { color: #54708f; }
.orange { color: #d8903e; }

.transfers {
    flex: 1;
    display: flex;
    flex-direction: column;
    gap: 6px;
    padding: 2px 2px 8px 6px;
}

.transfer-list {
    flex: 1;
    display: flex;
    flex-direction: column;
    border: 1px solid #828790;
    background: #fff;
    text-align: right;
}

.transfer-head, .transfer-row {
    height: 24px;
    padding: 3px 16px 3px 0;
}

.transfer-row {
    height: 20px;
    background: #d9d9d9;
}

.scroll-right {
    align-self: flex-end;
    margin-top: auto;
    padding: 4px;
    background: #efefef;
    color: #444;
}

.scroll-right svg {
    width: 10px;
    height: 10px;
}

.speed {
    height: 22px;
    padding-right: 15px;
    border: 1px solid #adadad;
    background: #e1e1e1;
    text-align: right;
}

.torrent-status {
    display: flex;
    align-items: center;
    justify-content: flex-end;
    height: 25px;
    padding-right: 14px;
    border-top: 1px solid #d0d0d0;
}

.torrent-status span {
    display: flex;
    align-items: center;
    gap: 4px;
    height: 16px;
    padding: 0 9px;
    white-space: nowrap;
}

.torrent-status span + span {
    border-left: 1px solid #999;
}

.torrent-status .rate {
    width: 214px;
}

.torrent-status .plug {
    width: 16px;
    height: 16px;
    color: #35752f;
}

.torrent-status .gauge {
    width: 26px;
    height: 12px;
}

/* file explorer */
.explorer {
    inset: 14px 211px 73px 283px;
    border: 1px solid #7d8a96;
}

.explorer-top {
    display: flex;
    height: 30px;
}

.quick {
    display: flex;
    align-items: center;
    gap: 7px;
    width: 229px;
    padding-left: 8px;
}

.quick i {
    width: 1px;
    height: 14px;
    background: #888;
}

.quick i + svg {
    margin-left: 3px;
}

.context {
    width: 159px;
    margin-top: 3px;
    padding-top: 6px;
    background: #fcc5de;
    color: #4a2436;
    text-align: center;
}

.explorer-top h1 {
    padding: 7px 13px;
    color: #8a8a8a;
}

.controls {
    display: flex;
    margin-left: auto;
    color: #888;
}

.controls button {
    display: flex;
    align-items: center;
    justify-content: center;
    width: 46px;
}

.controls svg {
    width: 12px;
    height: 12px;
}

.min {
    width: 11px;
    height: 1px;
    background: #888;
}

.max {
    width: 10px;
    height: 10px;
    border: 1px solid #888;
}

.tabs {
    display: flex;
    height: 24px;
    border-bottom: 1px solid #dadbdc;
    color: #333;
}

.tabs button {
    width: 57px;
}

.tabs .file {
    background: #0063b1;
    color: #fff;
}

.tabs .home {
    height: 24px;
    border: 1px solid #dadbdc;
    border-bottom: none;
    background: #f5f6f7;
}

.tabs .tools {
    width: 160px;
    border-left: 1px solid #e6e6e6;
    border-right: 1px solid #e6e6e6;
}

.tabs-end {
    display: flex;
    align-items: center;
    gap: 9px;
    margin-left: auto;
    padding-right: 3px;
}

.collapse {
    width: 10px;
    height: 10px;
    color: #888;
    transform: rotate(180deg);
}

.ribbon {
    display: flex;
    height: 92px;
    border-bottom: 1px solid #dadbdc;
    background: #f5f6f7;
    color: #222;
}

.group {
    display: flex;
    flex-direction: column;
    justify-content: space-between;
    margin: 3px 0 2px;
    border-right: 1px solid #e2e3e4;
}

.group h2 {
    color: #444;
    text-align: center;
}

.group-body {
    display: flex;
}

.clipboard { width: 263px; }
.organize { width: 165px; }
.new { width: 83px; }
.open { width: 131px; }
.select { width: 117px; }

.big {
    display: flex;
    flex-direction: column;
    align-items: center;
    width: 48px;
    padding-top: 5px;
    line-height: 13px;
}

.big svg {
    width: 26px;
    height: 30px;
    margin-bottom: 5px;
}

.clipboard .big:first-child {
    width: 72px;
    margin-left: 2px;
}

.clipboard .big:nth-child(2), .clipboard .big:nth-child(3) {
    width: 41px;
}

.open .big {
    width: 62px;
}

.big .caret {
    margin-top: 5px;
}

.pin {
    padding: 2px;
}

.muted {
    color: #858585;
}

.stack {
    display: flex;
    flex-direction: column;
}

.stack button {
    display: flex;
    align-items: center;
    gap: 3px;
    height: 22px;
    white-space: nowrap;
}

.group-body > .stack {
    margin-left: 2px;
}

.organize .loose {
    gap: 7px;
    padding: 8px 4px 0;
}

.organize .ruled {
    padding-left: 7px;
    border-right: 1px solid #e2e3e4;
}

.select .stack {
    padding-left: 7px;
}

.caret {
    margin-left: 2px;
    border: 3px solid transparent;
    border-top-color: #333;
    border-bottom: none;
}

.customize {
    margin-right: 4px;
    border-width: 4px;
    border-bottom: none;
    border-top-color: #000;
}

.address {
    display: flex;
    align-items: center;
    gap: 7px;
    height: 34px;
    padding: 0 12px 0 12px;
    color: #555;
}

.address .faint {
    color: #d0d0d0;
}

.address .flip {
    transform: rotate(180deg);
    margin-left: 5px;
}

.address .tiny svg {
    width: 8px;
    height: 8px;
    margin: 0 3px;
}

.crumbs {
    flex: 1;
    display: flex;
    align-items: center;
    gap: 7px;
    height: 22px;
    padding-left: 2px;
    border: 1px solid #d9d9d9;
    color: #222;
}

.crumbs svg:not(.icon) {
    width: 8px;
    height: 8px;
    color: #555;
}

.crumbs .drop {
    margin-left: auto;
}

.crumbs .refresh {
    height: 20px;
    padding: 0 4px;
    border-left: 1px solid #d9d9d9;
}

.crumbs .refresh svg {
    width: 12px;
    height: 12px;
}

.find {
    display: flex;
    align-items: center;
    width: 202px;
    height: 22px;
    padding: 0 6px 0 8px;
    border: 1px solid #d9d9d9;
}

input {
    flex: 1;
    min-width: 0;
    border: none;
    outline: none;
    background: none;
    font: inherit;
}

input::placeholder {
    color: #666;
    opacity: 1;
}

.find svg {
    width: 14px;
    height: 14px;
}

.explorer-body {
    flex: 1;
    display: flex;
    min-height: 0;
}

.tree {
    width: 140px;
    overflow: hidden;
}

.tree a {
    display: flex;
    align-items: center;
    gap: 5px;
    height: 24px;
    padding-left: 40px;
    white-space: nowrap;
}

.tree .root {
    padding-left: 32px;
}

.tree .child {
    padding-left: 48px;
    background: #d9d9d9;
}

.vscroll {
    display: flex;
    flex-direction: column;
    align-items: center;
    justify-content: space-between;
    width: 16px;
    padding: 4px 0;
    background: #f0f0f0;
    color: #555;
}

.vscroll svg, .hscroll svg {
    width: 10px;
    height: 10px;
}

.vtrack {
    flex: 1;
    width: 100%;
    padding-top: 107px;
}

.vthumb {
    height: 112px;
    background: #cdcdcd;
}

.files {
    flex: 1;
    display: flex;
    flex-direction: column;
    justify-content: space-between;
    padding-left: 4px;
}

.files table {
    width: calc(100% - 27px);
    margin-left: 15px;
    border-collapse: collapse;
    table-layout: fixed;
    color: #666;
}

.files th {
    height: 26px;
    padding-left: 6px;
    border-right: 1px solid #e5e5e5;
    color: #44546f;
    font-weight: normal;
    text-align: left;
}

.files th.name {
    position: relative;
    width: 257px;
    padding-left: 2px;
}

.files th:nth-child(2) { width: 144px; }
.files th:nth-child(3) { width: 120px; }

.files tbody::before {
    content: "";
    display: block;
    height: 6px;
}

.files td {
    height: 21px;
    padding-left: 6px;
    white-space: nowrap;
}

.files td:first-child {
    padding-left: 3px;
    color: #000;
}

.files td:last-child {
    padding-right: 4px;
    text-align: right;
}

.files td svg {
    display: inline-block;
    margin-right: 4px;
    vertical-align: middle;
}

.sort {
    position: absolute;
    top: 0;
    left: 48%;
    width: 8px;
    height: 8px;
    color: #888;
    transform: rotate(180deg);
}

.picked {
    background: #d9d9d9;
}

.hscroll {
    display: flex;
    align-items: center;
    gap: 4px;
    height: 17px;
    padding: 0 3px;
    background: #f0f0f0;
    color: #444;
}

.hthumb {
    flex: 1;
    height: 15px;
    background: #cdcdcd;
}

.explorer-status {
    display: flex;
    align-items: center;
    gap: 21px;
    height: 24px;
    padding: 0 4px 0 14px;
    color: #2b4a73;
}

.view {
    display: flex;
    align-items: center;
    justify-content: center;
    width: 22px;
    height: 22px;
    margin-left: -21px;
}

.view.on {
    margin-left: auto;
    border: 1px solid #49a9de;
    background: #cce8f8;
}

.view svg {
    width: 14px;
}

.view.on svg {
    width: 18px;
}

/* replace dialog */
.dialog {
    top: 237px;
    left: 459px;
    width: 254px;
    border: 1px solid #555;
    background: #efefef;
    box-shadow: 0 2px 8px rgba(0, 0, 0, 0.2);
}

.dialog header {
    display: flex;
    align-items: center;
    justify-content: space-between;
    height: 25px;
    padding: 0 9px 0 3px;
    background: #fff;
}

.dialog header svg {
    width: 12px;
    height: 12px;
}

.question {
    margin: 4px 3px 0;
    padding: 7px 10px 3px;
    border: 1px solid #dcdcdc;
    font-family: "Liberation Sans", Arial, sans-serif;
    line-height: 16px;
    white-space: nowrap;
}

.center {
    text-align: center;
}

.ask {
    margin-top: 9px;
}

.entry {
    display: flex;
    align-items: center;
    gap: 14px;
    padding: 7px 0 6px 5px;
}

.entry svg {
    width: 23px;
    height: 30px;
}

.answers {
    display: grid;
    grid-template-columns: repeat(3, 1fr);
    gap: 1px;
    padding: 9px 14px 7px;
    font-family: "Liberation Sans", Arial, sans-serif;
}

.answers button {
    height: 20px;
    border: 1px solid #adadad;
    background: #e1e1e1;
}

.answers .default {
    border-color: #3a86c0;
    background: #e0f2fd;
}

.watermark {
    position: absolute;
    right: 49px;
    bottom: 8px;
    display: flex;
    align-items: center;
    justify-content: space-between;
    width: 192px;
    font-family: "Roboto Condensed", "Roboto", sans-serif;
    font-size: 32px;
    line-height: 62px;
    color: rgba(220, 230, 250, 0.6);
}

.watermark svg {
    width: 54px;
    height: 62px;
}

/* taskbar */
.taskbar {
    display: flex;
    height: 40px;
    background: linear-gradient(90deg, #001722, #001520 50%, #020819);
    color: #fff;
}

.start {
    display: flex;
    align-items: center;
    justify-content: center;
    width: 48px;
}

.search {
    display: flex;
    align-items: center;
    gap: 10px;
    width: 288px;
    padding: 0 11px;
    border: 1px solid #c8c8c8;
    background: #f1f1f1;
    color: #222;
    font-size: 14px;
    line-height: 20px;
}

.search input {
    height: 24px;
}

.search input::placeholder {
    color: #333;
}

.app {
    display: flex;
    align-items: center;
    justify-content: center;
    width: 49px;
}

.app svg {
    width: 24px;
    height: 24px;
}

.app .thin {
    width: 16px;
    height: 16px;
}

.running {
    background: linear-gradient(#76b9ed, #76b9ed) bottom / 40px 3px no-repeat;
}

.tray {
    display: flex;
    align-items: center;
    gap: 8px;
    margin-left: auto;
    margin-right: 4px;
    padding-right: 20px;
    border-right: 1px solid #555c68;
}

.tray .upward {
    width: 14px;
    height: 14px;
}

.clock {
    width: 56px;
    margin-right: 8px;
    line-height: 18px;
    text-align: center;
}
```
